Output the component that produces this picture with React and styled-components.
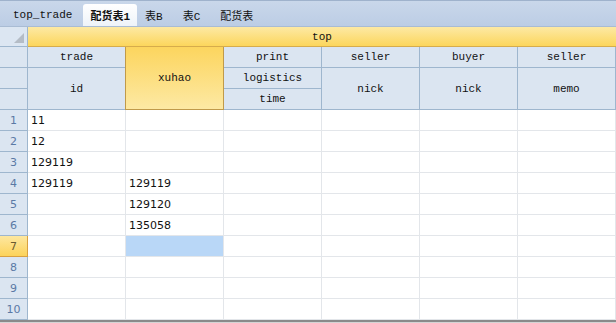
import React from "react";
import styled, { createGlobalStyle } from "styled-components";

const GlobalStyle = createGlobalStyle`
  html, body {
    margin: 0;
    padding: 0;
    background: #ffffff;
  }
  * {
    box-sizing: border-box;
  }
`;

const Page = styled.div`
  width: 616px;
  height: 323px;
  display: flex;
  flex-direction: column;
  overflow: hidden;
  background: #ffffff;
`;

const TabBar = styled.div`
  height: 27px;
  display: flex;
  align-items: flex-end;
  padding-left: 6px;
  background: linear-gradient(#c9d7ea, #bccde5);
  border-top: 1px solid #9fb2cc;
  border-bottom: 1px solid #a9bcd4;
`;

const Tab = styled.div`
  height: 22px;
  display: flex;
  align-items: center;
  padding: 0 7px;
  margin-right: ${(p) => p.$gap || 0}px;
  font-family: "Liberation Mono", "Noto Sans CJK SC", monospace;
  font-size: 11px;
  color: #111;
  font-weight: ${(p) => (p.$active ? 700 : 400)};
  background: ${(p) => (p.$active ? "linear-gradient(#ffffff, #eef3f9)" : "transparent")};
  border-radius: 3px 3px 0 0;
`;

const Sheet = styled.div`
  display: grid;
  grid-template-columns: 28px repeat(6, 98px);
  grid-template-rows: 20px 21px 21px 21px repeat(10, 21px);
`;

const Corner = styled.div`
  grid-column: 1;
  grid-row: 1;
  background: #dce6f2;
  border-right: 1px solid #9eb6ce;
  border-bottom: 1px solid #9eb6ce;
  display: flex;
  align-items: flex-end;
  justify-content: flex-end;
  padding: 0 3px 3px 0;
`;

const Triangle = styled.div`
  width: 0;
  height: 0;
  border-left: 10px solid transparent;
  border-bottom: 10px solid #b4bcc6;
`;

const TopBand = styled.div`
  grid-column: 2 / 8;
  grid-row: 1;
  background: linear-gradient(#fde9a4, #fcd65c);
  border-bottom: 1px solid #d6ac4c;
  display: flex;
  align-items: center;
  justify-content: center;
  font-family: "Liberation Mono", monospace;
  font-size: 11px;
  color: #111;
`;

const HeadCell = styled.div`
  grid-column: ${(p) => p.$col};
  grid-row: ${(p) => p.$row};
  background: ${(p) => (p.$sel ? "linear-gradient(#fcd55e, #fde9a4)" : "#dbe5f1")};
  border-right: 1px solid ${(p) => (p.$sel ? "#c09a4a" : "#9eb6ce")};
  border-bottom: 1px solid ${(p) => (p.$sel ? "#c09a4a" : "#9eb6ce")};
  border-left: ${(p) => (p.$sel ? "1px solid #c09a4a" : "none")};
  margin-left: ${(p) => (p.$sel ? "-1px" : "0")};
  display: flex;
  align-items: center;
  justify-content: center;
  font-family: "Liberation Mono", monospace;
  font-size: 11px;
  color: #111;
`;

const RowHead = styled.div`
  grid-column: 1;
  background: ${(p) => (p.$sel ? "linear-gradient(#fde7a0, #fcd35a)" : "#dbe5f1")};
  border-right: 1px solid ${(p) => (p.$sel ? "#d8a040" : "#9eb6ce")};
  border-bottom: 1px solid ${(p) => (p.$sel ? "#d8a040" : "#9eb6ce")};
  display: flex;
  align-items: center;
  justify-content: center;
  font-family: "DejaVu Sans", sans-serif;
  font-size: 11px;
  color: ${(p) => (p.$sel ? "#6a5a30" : "#5a79a5")};
`;

const Cell = styled.div`
  background: ${(p) => (p.$sel ? "#b9d7f7" : "#ffffff")};
  border-right: 1px solid #e3e6ea;
  border-bottom: 1px solid #e3e6ea;
  display: flex;
  align-items: center;
  padding-left: 3px;
  font-family: "DejaVu Sans", sans-serif;
  font-size: 11px;
  color: #111;
`;

const BottomEdge = styled.div`
  height: 3px;
  border-top: 2px solid #8a8a8a;
  background: #d4d4d4;
`;

const tabs = [
  { label: "top_trade", gap: 4 },
  { label: "配货表1", active: true, gap: 1 },
  { label: "表B", gap: 6 },
  { label: "表C", gap: 6 },
  { label: "配货表" },
];

const heads = [
  { text: "trade", col: 2, row: "2" },
  { text: "id", col: 2, row: "3 / 5" },
  { text: "xuhao", col: 3, row: "2 / 5", sel: true },
  { text: "print", col: 4, row: "2" },
  { text: "logistics", col: 4, row: "3" },
  { text: "time", col: 4, row: "4" },
  { text: "seller", col: 5, row: "2" },
  { text: "nick", col: 5, row: "3 / 5" },
  { text: "buyer", col: 6, row: "2" },
  { text: "nick", col: 6, row: "3 / 5" },
  { text: "seller", col: 7, row: "2" },
  { text: "memo", col: 7, row: "3 / 5" },
];

const rows = [
  ["11", ""],
  ["12", ""],
  ["129119", ""],
  ["129119", "129119"],
  ["", "129120"],
  ["", "135058"],
  ["", ""],
  ["", ""],
  ["", ""],
  ["", ""],
];

const App = () => {
  return (
    <Page>
      <GlobalStyle />
      <TabBar>
        {tabs.map((t) => (
          <Tab key={t.label} $active={t.active} $gap={t.gap}>
            {t.label}
          </Tab>
        ))}
      </TabBar>
      <Sheet>
        <Corner>
          <Triangle />
        </Corner>
        <TopBand>top</TopBand>
        {[2, 3, 4].map((r) => (
          <RowHead key={"h" + r} style={{ gridRow: r }} />
        ))}
        {heads.map((h, i) => (
          <HeadCell key={i} $col={h.col} $row={h.row} $sel={h.sel}>
            {h.text}
          </HeadCell>
        ))}
        {rows.map((r, i) => (
          <React.Fragment key={i}>
            <RowHead $sel={i === 6}>{i + 1}</RowHead>
            <Cell>{r[0]}</Cell>
            <Cell $sel={i === 6}>{r[1]}</Cell>
            <Cell />
            <Cell />
            <Cell />
            <Cell />
          </React.Fragment>
        ))}
      </Sheet>
      <BottomEdge />
    </Page>
  );
};

export default App;
